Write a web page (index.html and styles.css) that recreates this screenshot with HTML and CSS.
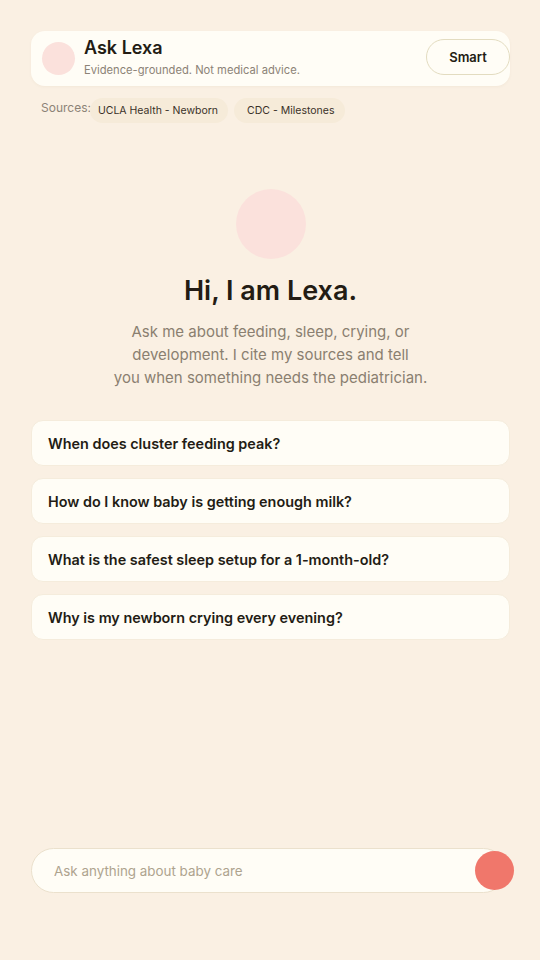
FILE: index.html
```html
<!DOCTYPE html>
<html lang="en">
<head>
    <meta charset="UTF-8">
    <meta name="viewport" content="width=device-width, initial-scale=1.0">
    <title>Ask Lexa</title>
    <link rel="stylesheet" href="styles.css">
</head>
<body>
    <div class="app">
        <header class="top-card">
            <div class="avatar small"></div>
            <div class="top-text">
                <div class="top-title">Ask Lexa</div>
                <div class="top-sub">Evidence-grounded. Not medical advice.</div>
            </div>
            <button class="mode-btn">Smart</button>
        </header>

        <div class="sources">
            <span class="sources-label">Sources:</span>
            <span class="chip">UCLA Health - Newborn</span>
            <span class="chip">CDC - Milestones</span>
        </div>

        <div class="hero">
            <div class="avatar big"></div>
            <h1>Hi, I am Lexa.</h1>
            <p>Ask me about feeding, sleep, crying, or<br>development. I cite my sources and tell<br>you when something needs the pediatrician.</p>
        </div>

        <div class="questions">
            <button class="question">When does cluster feeding peak?</button>
            <button class="question">How do I know baby is getting enough milk?</button>
            <button class="question">What is the safest sleep setup for a 1-month-old?</button>
            <button class="question">Why is my newborn crying every evening?</button>
        </div>

        <div class="composer">
            <input type="text" placeholder="Ask anything about baby care">
            <button class="send"></button>
        </div>
    </div>
</body>
</html>
```

FILE: styles.css
```css
* {
    box-sizing: border-box;
}
body {
    margin: 0;
    padding: 0;
    background: #faf0e3;
    color: #231c14;
    font-family: 'Inter', 'Noto Sans', sans-serif;
}
.app {
    height: 960px;
    display: flex;
    flex-direction: column;
    padding: 31px 30px 67px 31px;
}
.top-card {
    display: flex;
    align-items: center;
    height: 55px;
    padding-left: 11px;
    background: #fffdf6;
    border-radius: 14px;
    box-shadow: 0 1px 3px rgba(120, 90, 50, 0.05);
}
.avatar {
    border-radius: 50%;
    background: #fbe1dc;
    flex-shrink: 0;
}
.avatar.small {
    width: 33px;
    height: 33px;
}
.top-text {
    flex: 1;
    margin-left: 9px;
}
.top-title {
    font-size: 18px;
    font-weight: 600;
    line-height: 22px;
    margin-top: -3px;
}
.top-sub {
    font-size: 11.2px;
    color: #8c8377;
    line-height: 16px;
    margin-top: 3px;
}
.mode-btn {
    width: 84px;
    height: 36px;
    border: 1.5px solid #e3dcc0;
    border-radius: 18px;
    background: #fffdf6;
    font-family: inherit;
    font-size: 13px;
    font-weight: 600;
    color: #231c14;
    margin-top: -3px;
}
.sources {
    display: flex;
    align-items: center;
    gap: 6px;
    margin-top: 12px;
    padding-left: 10px;
}
.sources-label {
    font-size: 12px;
    color: #8c8377;
    margin-top: -6px;
    margin-right: -7px;
}
.chip {
    font-size: 10.5px;
    color: #3a3128;
    background: #f6ebd9;
    padding: 6px 10px 6px 8px;
    border-radius: 13px;
}
.chip + .chip {
    padding: 6px 11px 6px 13px;
}
.hero {
    display: flex;
    flex-direction: column;
    align-items: center;
    margin-top: 66px;
}
.avatar.big {
    width: 70px;
    height: 70px;
}
.hero h1 {
    font-size: 27px;
    font-weight: 600;
    margin: 16px 0 0;
    line-height: 32px;
}
.hero p {
    text-align: center;
    font-size: 15px;
    line-height: 23px;
    color: #8a7f70;
    margin: 13px 0 0;
}
.questions {
    display: flex;
    flex-direction: column;
    gap: 12px;
    margin-top: 31px;
}
.question {
    height: 46px;
    text-align: left;
    padding: 0 16px;
    background: #fffdf6;
    border: 1px solid #f5ecdc;
    border-radius: 12px;
    font-family: inherit;
    font-size: 14.4px;
    font-weight: 600;
    color: #231c14;
}
.composer {
    margin-top: auto;
    display: flex;
    align-items: center;
    height: 45px;
    background: #fffdf6;
    border: 1px solid #ebe1cd;
    border-radius: 23px;
    padding-left: 20px;
    margin-right: 4px;
}
.composer input {
    flex: 1;
    border: none;
    outline: none;
    background: transparent;
    font-family: inherit;
    font-size: 13.4px;
    color: #231c14;
}
.composer input::placeholder {
    color: #aea38e;
}
.send {
    width: 39px;
    height: 39px;
    border: none;
    border-radius: 50%;
    background: #f0776b;
    margin-right: -9px;
}
```
